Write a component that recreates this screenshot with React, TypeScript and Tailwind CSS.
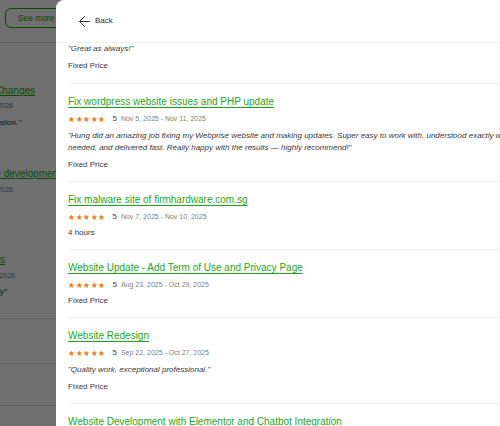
import React from 'react';
import { ArrowLeft } from 'lucide-react';

type Review = {
  title: string;
  dates: string;
  quote?: string;
  kind: string;
};

const reviews: Review[] = [
  {
    title: 'Fix wordpress website issues and PHP update',
    dates: 'Nov 5, 2025 - Nov 11, 2025',
    quote:
      '"Hung did an amazing job fixing my Webprise website and making updates. Super easy to work with, understood exactly what I needed, and delivered fast. Really happy with the results — highly recommend!"',
    kind: 'Fixed Price',
  },
  {
    title: 'Fix malware site of firmhardware.com.sg',
    dates: 'Nov 7, 2025 - Nov 10, 2025',
    kind: '4 hours',
  },
  {
    title: 'Website Update - Add Term of Use and Privacy Page',
    dates: 'Aug 23, 2025 - Oct 29, 2025',
    kind: 'Fixed Price',
  },
  {
    title: 'Website Redesign',
    dates: 'Sep 22, 2025 - Oct 27, 2025',
    quote: '"Quality work, exceptional professional."',
    kind: 'Fixed Price',
  },
  {
    title: 'Website Development with Elementor and Chatbot Integration',
    dates: 'Jul 2, 2025 - Sep 30, 2025',
    kind: 'Fixed Price',
  },
];

const Star = () => (
  <svg viewBox="0 0 24 24" className="w-[6.6px] h-[6.6px]" fill="#ef7f1a">
    <path d="M12 1.5l3.1 6.9 7.4.7-5.6 5 1.7 7.4L12 17.6l-6.6 3.9 1.7-7.4-5.6-5 7.4-.7z" />
  </svg>
);

const Stars = () => (
  <div className="flex items-center gap-[1px]">
    <Star />
    <Star />
    <Star />
    <Star />
    <Star />
  </div>
);

const ReviewItem: React.FC<{ review: Review }> = ({ review }) => (
  <div className="border-t border-[#eff1ef] pt-[11px] pb-[10px]">
    <a className="block text-[10px] leading-[14px] text-[#1aa81a] underline underline-offset-[1.5px] whitespace-nowrap">
      {review.title}
    </a>
    <div className="flex items-center h-[10px] mt-[5px]">
      <Stars />
      <span className="ml-[7.5px] text-[8px] text-[#444]">5</span>
      <span className="ml-[4px] text-[7px] text-[#7a7f7a]">{review.dates}</span>
    </div>
    {review.quote && (
      <p className="mt-[6px] text-[8px] leading-[12px] italic text-[#383838]">{review.quote}</p>
    )}
    <p className="mt-[5px] text-[8px] leading-[12px] text-[#383838]">{review.kind}</p>
  </div>
);

export default function App() {
  return (
    <div
      className="relative w-[500px] h-[426px] overflow-hidden bg-white"
      style={{ fontFamily: '"Liberation Sans", Arial, sans-serif' }}
    >
      {/* page behind the drawer */}
      <div className="w-[56px] overflow-hidden">
        <div className="pt-[8px] pl-[5px]">
          <div className="w-[120px] h-[20px] border border-[#14a800] rounded-[6px] flex items-center pl-[12px] text-[8.4px] text-[#14a800] whitespace-nowrap">
            See more projects
          </div>
        </div>
        <div className="mt-[14px] border-t border-[#e6e6e6]" />
        <div className="whitespace-nowrap">
          <div className="flex justify-end pr-[21px] mt-[41px] text-[10px] leading-[14px] text-[#14a800] underline">
            Website Changes
          </div>
          <div className="flex justify-end pr-[43px] mt-[3px] text-[7px] leading-[10px] text-[#6f7a6f]">
            Dec 1, 2025 - Jan 5, 2026
          </div>
          <div className="flex justify-end pr-[35px] mt-[6px] text-[8px] leading-[12px] italic text-[#2c2c2c]">
            "Great communication."
          </div>
          <div className="ml-[-84px] mt-[38px] text-[10px] leading-[14px] text-[#14a800] underline">
            Wordpress website development
          </div>
          <div className="flex justify-end pr-[43px] mt-[4px] text-[7px] leading-[10px] text-[#6f7a6f]">
            Dec 3, 2025 - Jan 9, 2026
          </div>
          <div className="flex justify-end pr-[51px] mt-[58px] text-[10px] leading-[14px] text-[#14a800] underline">
            Updates
          </div>
          <div className="flex justify-end pr-[41px] mt-[4px] text-[7px] leading-[10px] text-[#6f7a6f]">
            Nov 20, 2025 - Jan 2, 2026
          </div>
          <div className="flex justify-end pr-[49px] mt-[5px] text-[8px] leading-[12px] italic text-[#2c2c2c]">
            "Very quick and friendly"
          </div>
        </div>
        <div className="mt-[20px] border-t border-[#e6e6e6]" />
        <div className="mt-[44px] border-t border-[#e6e6e6]" />
        <div className="mt-[41px] border-t border-[#e6e6e6]" />
      </div>

      {/* backdrop */}
      <div className="absolute inset-0 bg-black/[0.56]" />

      {/* drawer */}
      <div className="absolute left-[56px] top-0 bottom-0 w-[484px] bg-white rounded-tl-[8px] overflow-hidden">
        <div className="h-[43px] flex items-center pl-[19.5px] border-b border-[#eff1ef]">
          <ArrowLeft size={17} strokeWidth={1.4} className="text-[#2c2c2c]" />
          <span className="ml-[2.5px] text-[8px] text-[#2c2c2c]">Back</span>
        </div>
        <div className="px-[12px]">
          <div className="pb-[11px]">
            <p className="text-[8px] leading-[12px] italic text-[#383838]">"Great as always!"</p>
            <p className="mt-[5px] text-[8px] leading-[12px] text-[#383838]">Fixed Price</p>
          </div>
          {reviews.map((r) => (
            <ReviewItem key={r.title} review={r} />
          ))}
        </div>
      </div>
    </div>
  );
}
